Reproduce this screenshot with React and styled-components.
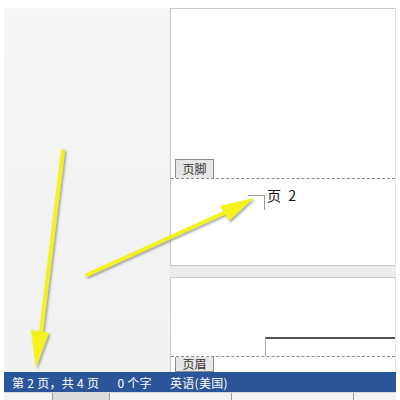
import React from 'react';
import styled, { createGlobalStyle } from 'styled-components';

const GlobalStyle = createGlobalStyle`
  html, body {
    margin: 0;
    padding: 0;
    background: #ffffff;
  }
  body {
    font-family: "Liberation Sans", "Noto Sans CJK SC", sans-serif;
  }
`;

const Frame = styled.div`
  position: relative;
  width: 400px;
  height: 400px;
  overflow: hidden;
  background: #ffffff;
  padding: 8px 4px 0 4px;
  box-sizing: border-box;
  display: flex;
  flex-direction: column;
`;

const Workspace = styled.div`
  display: flex;
  height: 364px;
  overflow: hidden;
`;

const LeftPane = styled.div`
  width: 166px;
  flex-shrink: 0;
  background: linear-gradient(180deg, #f6f6f6 0%, #f1f1f1 100%);
`;

const PagesColumn = styled.div`
  flex: 1;
  display: flex;
  flex-direction: column;
  gap: 11px;
  background: #ececec;
`;

const Page = styled.div`
  background: #ffffff;
  border: 1px solid #c8c8c8;
  border-right-color: #e4e4e4;
  height: ${p => p.h}px;
  flex-shrink: 0;
  box-sizing: border-box;
  display: flex;
  flex-direction: column;
`;

const Spacer = styled.div`
  height: ${p => p.h}px;
  flex-shrink: 0;
`;

const DashedLine = styled.div`
  border-top: 1px dashed #8a8a8a;
  height: 0;
`;

const Tag = styled.div`
  align-self: flex-start;
  margin-left: 4px;
  width: 39px;
  height: ${p => p.h || 19}px;
  box-sizing: border-box;
  background: #e6e6e6;
  border: 1px solid #8c8c8c;
  ${p => (p.below ? 'border-top: none;' : 'border-bottom: none;')}
  font-family: "Noto Sans CJK SC", sans-serif;
  font-size: 12px;
  line-height: ${p => (p.h ? p.h - 1 : 18)}px;
  text-align: center;
  color: #333333;
  overflow: hidden;
`;

const FooterArea = styled.div`
  display: flex;
  align-items: flex-start;
  padding: 8px 0 0 77px;
`;

const CropMark = styled.div`
  width: 17px;
  height: 15px;
  border-top: 1px solid #999999;
  border-right: 1px solid #999999;
  margin-top: 8px;
  box-sizing: border-box;
`;

const PageNumber = styled.span`
  font-family: "Noto Sans CJK SC", sans-serif;
  font-size: 14px;
  line-height: 16px;
  color: #111111;
  margin-left: 2px;
  word-spacing: 4px;
`;

const HeaderRow = styled.div`
  display: flex;
  justify-content: flex-end;
`;

const BlankBox = styled.div`
  width: 130px;
  height: 19px;
  border-top: 2px solid #555555;
  border-left: 1px solid #aaaaaa;
  box-sizing: border-box;
  background: #ffffff;
`;

const StatusBar = styled.div`
  height: 20px;
  background: #2a5699;
  color: #ffffff;
  display: flex;
  align-items: center;
  padding-left: 8px;
  gap: 18px;
  font-family: "Noto Sans CJK SC", sans-serif;
  font-size: 12px;
  letter-spacing: 0.3px;
`;

const StatusItem = styled.span`
  white-space: pre;
`;

const BottomStrip = styled.div`
  flex: 1;
  display: flex;
  background: #f3f3f3;
  border-top: 1px solid #d8d8d8;
`;

const StripCell = styled.div`
  width: ${p => p.w}px;
  flex-shrink: 0;
  border-right: 1px solid #9a9a9a;
  background: ${p => (p.dark ? '#dcdcdc' : 'transparent')};
`;

const Overlay = styled.svg`
  position: absolute;
  left: 0;
  top: 0;
  pointer-events: none;
`;

function Arrows() {
  return (
    <Overlay width="400" height="400" viewBox="0 0 400 400">
      <defs>
        <filter id="shade" x="-20%" y="-20%" width="140%" height="140%">
          <feDropShadow dx="1.5" dy="1.5" stdDeviation="1.2" floodColor="#555" floodOpacity="0.55" />
        </filter>
      </defs>
      <g filter="url(#shade)" fill="#f2f21a" stroke="#f2f21a" strokeLinecap="round">
        <line x1="63" y1="151" x2="41" y2="333" strokeWidth="4" />
        <polygon points="31,330 49,333 36,368" stroke="none" />
        <line x1="87" y1="275" x2="226" y2="212" strokeWidth="4" />
        <polygon points="220,206 229,221 254,198" stroke="none" />
      </g>
    </Overlay>
  );
}

export default function App() {
  return (
    <>
      <GlobalStyle />
      <Frame>
        <Workspace>
          <LeftPane />
          <PagesColumn>
            <Page h={258}>
              <Spacer h={150} />
              <Tag>页脚</Tag>
              <DashedLine />
              <FooterArea>
                <CropMark />
                <PageNumber>页 2</PageNumber>
              </FooterArea>
            </Page>
            <Page h={110}>
              <Spacer h={59} />
              <HeaderRow>
                <BlankBox />
              </HeaderRow>
              <DashedLine />
              <Tag below h={15}>页眉</Tag>
            </Page>
          </PagesColumn>
        </Workspace>
        <StatusBar>
          <StatusItem>第 2 页，共 4 页</StatusItem>
          <StatusItem>0 个字</StatusItem>
          <StatusItem>英语(美国)</StatusItem>
        </StatusBar>
        <BottomStrip>
          <StripCell w={48} />
          <StripCell w={56} dark />
          <StripCell w={121} />
          <StripCell w={121} />
        </BottomStrip>
        <Arrows />
      </Frame>
    </>
  );
}
